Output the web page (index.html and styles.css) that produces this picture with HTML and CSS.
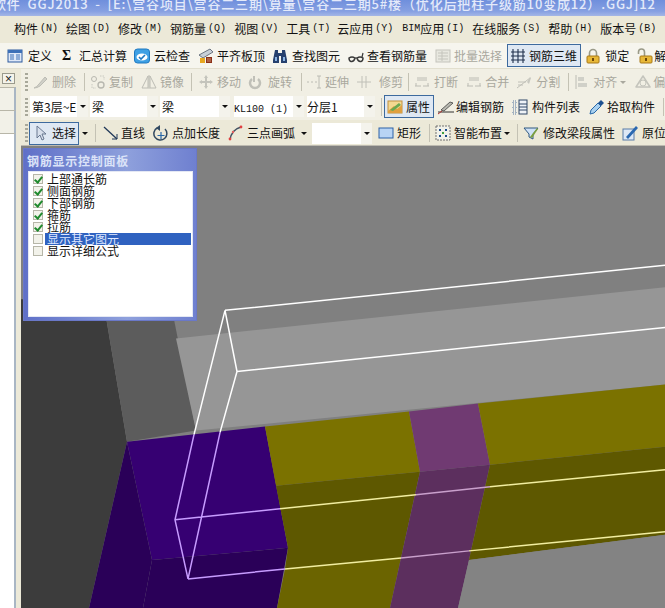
FILE: index.html
```html
<!DOCTYPE html>
<html lang="zh-CN">
<head>
<meta charset="utf-8">
<title>钢筋三维</title>
<link rel="stylesheet" href="styles.css">
</head>
<body>
<svg class="defs" width="0" height="0" aria-hidden="true">
  <symbol id="i-def" viewBox="0 0 16 16"><rect x="1" y="2" width="14" height="12" fill="#dfe8f8" stroke="#2c5a9e"/><rect x="1" y="2" width="14" height="3" fill="#3d70b8"/><path d="M3 7h4M3 9h4M3 11h4M9 7h4M9 9h4M9 11h4" stroke="#3d70b8"/></symbol>
  <symbol id="i-cloud" viewBox="0 0 16 16"><rect x="0.5" y="1" width="15" height="14" rx="3" fill="#3ea0e4" stroke="#1e78c0"/><ellipse cx="8" cy="9" rx="5.5" ry="3.6" fill="#fff"/><path d="M5 9l2 2 4-4" stroke="#1e78c0" stroke-width="1.6" fill="none"/></symbol>
  <symbol id="i-level" viewBox="0 0 16 16"><path d="M1 7L12 1l3 3L5 10z" fill="#c8d0d8" stroke="#6a7480"/><rect x="2" y="10" width="5" height="5" fill="#e8a820"/><rect x="8" y="9" width="6" height="6" fill="#8a3018"/><path d="M9 11h4M9 13h4" stroke="#d09070"/></symbol>
  <symbol id="i-bino" viewBox="0 0 16 16"><path d="M3 2h3v3h4V2h3l2 10v3H9V8H7v7H1v-3z" fill="#26406e"/><path d="M3 9h2v4H3zM11 9h2v4h-2z" fill="#8ab4e4"/></symbol>
  <symbol id="i-glass" viewBox="0 0 16 16"><path d="M1 10q3-2 6 0q-1 4-4 3.500Q1 13 1 10zM9 10q3-2 6 0q0 3-2 3.500Q10 14 9 10z" fill="none" stroke="#3a3a3a" stroke-width="1.500"/><path d="M7 10h2M14 9l1-4" stroke="#3a3a3a" stroke-width="1.200" fill="none"/></symbol>
  <symbol id="i-batch" viewBox="0 0 16 16"><rect x="1" y="2" width="14" height="12" fill="#e8e8e0" stroke="#c4c4bc"/><path d="M3 5h10M3 8h10M3 11h10M7 3v10" stroke="#c4c4bc"/></symbol>
  <symbol id="i-grid" viewBox="0 0 16 16"><path d="M1 4h14M1 8h14M1 12h14M3 1v14M8 1v14M13 1v14" stroke="#20304c" stroke-width="1.100"/></symbol>
  <symbol id="i-lock" viewBox="0 0 16 16"><path d="M4.500 8V5a3.500 3.500 0 017 0v3" fill="none" stroke="#9a9a88" stroke-width="1.600"/><rect x="2" y="8" width="12" height="7" rx="1" fill="#e8b838" stroke="#a87818"/><rect x="7" y="10" width="2" height="3" fill="#704808"/></symbol>
  <symbol id="i-unlock" viewBox="0 0 16 16"><path d="M1.500 6V4a3 3 0 016 0v4" fill="none" stroke="#9a9a88" stroke-width="1.600"/><rect x="3" y="8" width="12" height="7" rx="1" fill="#e8b838" stroke="#a87818"/><rect x="8" y="10" width="2" height="3" fill="#704808"/></symbol>
  <symbol id="i-erase" viewBox="0 0 16 16"><path d="M2 14q3-1 5-4l6-7 2 2-7 7q-3 2-6 2z" fill="#d0d0c8" stroke="#bcbcb4"/></symbol>
  <symbol id="i-copy" viewBox="0 0 16 16"><circle cx="4" cy="5" r="2.500" fill="none" stroke="#b8b8b0"/><circle cx="11" cy="11" r="3" fill="none" stroke="#b8b8b0" stroke-width="1.400"/><path d="M10 2h4v4M2 10v4h4" stroke="#c8c8c0" stroke-dasharray="1.500 1" fill="none"/></symbol>
  <symbol id="i-mirror" viewBox="0 0 16 16"><path d="M7 2L1 14h6zM9 2l6 12H9z" fill="none" stroke="#bcbcb4"/><path d="M8 1v14" stroke="#bcbcb4"/></symbol>
  <symbol id="i-move" viewBox="0 0 16 16"><path d="M8 1l2 3H9v3h3V6l3 2-3 2V9H9v3h1l-2 3-2-3h1V9H4v1L1 8l3-2v1h3V4H6z" fill="#c4c4bc"/></symbol>
  <symbol id="i-rotate" viewBox="0 0 16 16"><path d="M5 5a5 5 0 106 0" fill="none" stroke="#c0c0b8" stroke-width="2.500"/><path d="M7 2v6" stroke="#c0c0b8" stroke-width="2"/></symbol>
  <symbol id="i-extend" viewBox="0 0 16 16"><path d="M1 8h2M5 8h2M9 8h2" stroke="#bcbcb4"/><path d="M13 2v12M11 2h4M11 14h4" stroke="#bcbcb4"/></symbol>
  <symbol id="i-trim" viewBox="0 0 16 16"><path d="M1 8h14M6 2v12M10 2v12" stroke="#c0c0b8"/></symbol>
  <symbol id="i-break" viewBox="0 0 16 16"><path d="M1 12h6M9 12h6M2 12V9M14 12V9M3 6h10M3 4h10" stroke="#bcbcb4"/></symbol>
  <symbol id="i-split" viewBox="0 0 16 16"><path d="M1 14L14 4M2 8h8M2 11h5" stroke="#c0c0b8"/><path d="M11 8l3-5 1 1-2 6z" fill="#c8c8c0"/></symbol>
  <symbol id="i-align" viewBox="0 0 16 16"><path d="M2 1v14" stroke="#bcbcb4"/><rect x="4" y="3" width="6" height="4" fill="#d0d0c8"/><rect x="4" y="9" width="9" height="4" fill="#d0d0c8"/></symbol>
  <symbol id="i-offset" viewBox="0 0 16 16"><path d="M1 13L8 2l7 11z" fill="none" stroke="#c4c4bc" stroke-width="1.500" stroke-linejoin="round"/><circle cx="8" cy="9" r="3" fill="none" stroke="#c4c4bc"/></symbol>
  <symbol id="i-prop" viewBox="0 0 16 16"><rect x="1" y="2" width="14" height="12" fill="#f4d890" stroke="#c09040"/><path d="M1 12l6-5 3 3 5-4v8H1z" fill="#e0a040"/><path d="M3 11l9-7 2 2-8 6z" fill="#6aa850"/></symbol>
  <symbol id="i-edit" viewBox="0 0 16 16"><path d="M0 13h16" stroke="#303030"/><path d="M3 11l9-8 3 1-9 8z" fill="#b8b8b0" stroke="#404040" stroke-width=".8"/><path d="M0 15l4-3" stroke="#b03030"/></symbol>
  <symbol id="i-list" viewBox="0 0 16 16"><path d="M1 2h3v3H1zM1 7h3v3H1zM1 12h3v3H1z" fill="none" stroke="#5878a0" stroke-dasharray="1 1"/><rect x="7" y="1" width="8" height="14" fill="#eef2f8" stroke="#304868"/><path d="M7 5h8M7 8h8M7 11h8" stroke="#304868"/></symbol>
  <symbol id="i-pick" viewBox="0 0 16 16"><path d="M1 15l1-4 7-7 3 3-7 7z" fill="#a8d0f0" stroke="#2868a8"/><path d="M9 4l3-3 3 3-3 3z" fill="#1c5090"/></symbol>
  <symbol id="i-cursor" viewBox="0 0 10 16"><path d="M1 1v12l3-3 2 5 2-1-2-5h4z" fill="#d8e0ec" stroke="#687890"/></symbol>
  <symbol id="i-line" viewBox="0 0 16 16"><path d="M1 2l13 12" stroke="#203858" stroke-width="1.300"/><path d="M9 14h5V9" stroke="#203858" fill="none"/></symbol>
  <symbol id="i-addlen" viewBox="0 0 16 16"><path d="M5 3a6.500 6.500 0 108 1" fill="none" stroke="#304860" stroke-width="1.500"/><path d="M8 0v6L4 3z" fill="#304860"/><path d="M9 7v7M5.500 10.500h7" stroke="#2868a8" stroke-width="1.200"/></symbol>
  <symbol id="i-arc" viewBox="0 0 16 16"><path d="M2 15Q3 5 13 2" fill="none" stroke="#405060" stroke-width="1.400"/><circle cx="2" cy="14" r="1.400" fill="#e04040"/><circle cx="13" cy="2" r="1.400" fill="#e04040"/><circle cx="5" cy="7" r="1.200" fill="#e06060"/></symbol>
  <symbol id="i-rect" viewBox="0 0 16 16"><rect x="1" y="3" width="14" height="10" fill="#b8d4f4" stroke="#2c62a8"/></symbol>
  <symbol id="i-smart" viewBox="0 0 16 16"><rect x="1" y="1" width="14" height="14" fill="#f2f2ea" stroke="#707070" stroke-dasharray="2 1"/><path d="M4 4h2v2H4zM10 4h2v2h-2zM4 10h2v2H4zM10 10h2v2h-2z" fill="#1c4c8c"/><path d="M7 7h2v2H7z" fill="#40a040"/></symbol>
  <symbol id="i-filter" viewBox="0 0 16 16"><path d="M1 3h14l-5 6v5l-4-2V9z" fill="#cfe2f6" stroke="#305880"/><path d="M7 12l7-9 1 1-6 9z" fill="#7ca040"/></symbol>
  <symbol id="i-inplace" viewBox="0 0 16 16"><rect x="1" y="4" width="11" height="11" fill="#dde8f6" stroke="#587ca8"/><path d="M4 12L14 1l2 2L6 14z" fill="#2a68b0"/></symbol>
</svg>

<header class="titlebar"><span class="titletext">软件 GGJ2013 - [E:\宫谷项目\宫谷二三期\算量\宫谷二三期5#楼（优化后把柱子级筋10变成12）.GGJ]12</span></header>

<nav class="menubar">
  <span class="mi">构件<span class="lat">(N)</span></span>
  <span class="mi">绘图<span class="lat">(D)</span></span>
  <span class="mi">修改<span class="lat">(M)</span></span>
  <span class="mi">钢筋量<span class="lat">(Q)</span></span>
  <span class="mi">视图<span class="lat">(V)</span></span>
  <span class="mi">工具<span class="lat">(T)</span></span>
  <span class="mi m7">云应用<span class="lat">(Y)</span></span>
  <span class="mi m9"><span class="latn">BIM</span>应用<span class="lat">(I)</span></span>
  <span class="mi">在线服务<span class="lat">(S)</span></span>
  <span class="mi">帮助<span class="lat">(H)</span></span>
  <span class="mi">版本号<span class="lat">(B)</span></span>
  <span class="menubox m7"></span>
</nav>

<div class="toolbar tb1">
  <span class="tool g5"><svg class="ic"><use href="#i-def"/></svg>定义</span>
  <span class="tool m10 g9"><span class="sigma">Σ</span>汇总计算</span>
  <span class="tool m7 g4"><svg class="ic"><use href="#i-cloud"/></svg>云检查</span>
  <span class="tool m8 g3"><svg class="ic"><use href="#i-level"/></svg>平齐板顶</span>
  <span class="tool m7 g4"><svg class="ic"><use href="#i-bino"/></svg>查找图元</span>
  <span class="tool m8 g3"><svg class="ic"><use href="#i-glass"/></svg>查看钢筋量</span>
  <span class="tool m8 g3 off"><svg class="ic"><use href="#i-batch"/></svg>批量选择</span>
  <span class="tool m5 g3 on pad23"><svg class="ic"><use href="#i-grid"/></svg>钢筋三维</span>
  <span class="tool m4 g4"><svg class="ic"><use href="#i-lock"/></svg>锁定</span>
  <span class="tool m8 g1"><svg class="ic"><use href="#i-unlock"/></svg>解锁</span>
</div>

<div class="body">
  <aside class="sidepane">
    <div class="sidehead"><button class="closebtn" type="button">×</button></div>
    <div class="siderow"></div>
    <div class="siderow"></div>
    <div class="sidefill"></div>
  </aside>

  <main class="workarea">
    <div class="toolbar tb2">
      <span class="grip"></span>
      <span class="tool m4 g4 off"><svg class="ic"><use href="#i-erase"/></svg>删除</span>
      <span class="sep m8"></span>
      <span class="tool m5 g3 off"><svg class="ic"><use href="#i-copy"/></svg>复制</span>
      <span class="tool m8 g3 off"><svg class="ic"><use href="#i-mirror"/></svg>镜像</span>
      <span class="sep m7"></span>
      <span class="tool m6 g3 off"><svg class="ic"><use href="#i-move"/></svg>移动</span>
      <span class="tool m6 g5 off"><svg class="ic"><use href="#i-rotate"/></svg>旋转</span>
      <span class="sep m9"></span>
      <span class="tool m4 g3 off"><svg class="ic"><use href="#i-extend"/></svg>延伸</span>
      <span class="tool m7 g7 off"><svg class="ic"><use href="#i-trim"/></svg>修剪</span>
      <span class="sep m5"></span>
      <span class="tool m5 g4 off"><svg class="ic"><use href="#i-break"/></svg>打断</span>
      <span class="tool m8 g3 off"><svg class="ic"><use href="#i-break"/></svg>合并</span>
      <span class="tool m7 g4 off"><svg class="ic"><use href="#i-split"/></svg>分割</span>
      <span class="sep m8"></span>
      <span class="tool m5 g3 off"><svg class="ic"><use href="#i-align"/></svg>对齐<span class="arr off-arr"></span></span>
      <span class="tool m9 g2 off"><svg class="ic"><use href="#i-offset"/></svg>偏移</span>
    </div>

    <div class="toolbar tb3">
      <span class="grip"></span>
      <span class="sel s47 m2"><span class="seltext">第3层~E</span></span><span class="selarrow"><span class="arr"></span></span>
      <span class="sel s57 m2"><span class="seltext">梁</span></span><span class="selarrow"><span class="arr"></span></span>
      <span class="sel s59 m2"><span class="seltext">梁</span></span><span class="selarrow"><span class="arr"></span></span>
      <span class="sel s59 m4 flush"><span class="seltext"><span class="latn">KL100 (1)</span></span></span><span class="selarrow"><span class="arr"></span></span>
      <span class="sel s57 m3 flush"><span class="seltext">分层1</span></span><span class="selarrow"><span class="arr"></span></span>
      <span class="sep m6"></span>
      <span class="tool m2 g3 on pad23"><svg class="ic"><use href="#i-prop"/></svg>属性</span>
      <span class="tool m4 g2"><svg class="ic"><use href="#i-edit"/></svg>编辑钢筋</span>
      <span class="tool m8 g4"><svg class="ic"><use href="#i-list"/></svg>构件列表</span>
      <span class="tool m9 g2"><svg class="ic"><use href="#i-pick"/></svg>拾取构件</span>
      <span class="sep m8"></span>
    </div>

    <div class="toolbar tb4">
      <span class="grip"></span>
      <span class="tool m1 g6 on pad62"><svg class="ic10"><use href="#i-cursor"/></svg>选择</span>
      <span class="arrbox m2"><span class="arr"></span></span>
      <span class="sep m6"></span>
      <span class="tool m7 g2"><svg class="ic"><use href="#i-line"/></svg>直线</span>
      <span class="tool m7 g4"><svg class="ic"><use href="#i-addlen"/></svg>点加长度</span>
      <span class="tool m8 g3"><svg class="ic"><use href="#i-arc"/></svg>三点画弧</span>
      <span class="arrbox m5"><span class="arr"></span></span>
      <span class="sel s44 m4"></span><span class="selarrow"><span class="arr"></span></span>
      <span class="tool m6 g3"><svg class="ic"><use href="#i-rect"/></svg>矩形</span>
      <span class="sep m8"></span>
      <span class="tool m5 g3"><svg class="ic"><use href="#i-smart"/></svg>智能布置</span>
      <span class="arrbox m1"><span class="arr"></span></span>
      <span class="sep m6"></span>
      <span class="tool m5 g4"><svg class="ic"><use href="#i-filter"/></svg>修改梁段属性</span>
      <span class="tool m7 g4"><svg class="ic"><use href="#i-inplace"/></svg>原位标注</span>
    </div>

    <section class="viewport">
      <svg class="scene" viewBox="21 147 644 461" preserveAspectRatio="none">
        <rect x="21" y="147" width="644" height="461" fill="#808080"/>
        <polygon points="21,300 103,300 127,442 89,608 21,608" fill="#3c3c3c"/>
        <polygon points="103,300 170,300 196,431 127,442" fill="#5c5c5c"/>
        <polygon points="176,339 665,288 665,385 196,431" fill="#969696"/>
        <polygon points="127,442 265,427 288,548 152,560" fill="#360072"/>
        <polygon points="127,442 152,560 143,608 89,608" fill="#2a0058"/>
        <polygon points="152,560 288,548 277,608 143,608" fill="#2a0058"/>
        <polygon points="265,427 409,412 420,472 276,486" fill="#7b7200"/>
        <polygon points="276,486 420,472 401,558 285,569 288,548" fill="#5e5800"/>
        <polygon points="285,569 401,558 390,608 277,608" fill="#6b6400"/>
        <polygon points="409,412 478,404 490,465 420,472" fill="#703a72"/>
        <polygon points="420,472 490,465 469,560 458,608 390,608" fill="#5c2f5e"/>
        <polygon points="478,404 665,385 665,447 490,465" fill="#7b7200"/>
        <polygon points="490,465 665,447 665,535 469,560" fill="#5e5800"/>
        <polygon points="469,560 665,535 665,608 458,608" fill="#838383"/>
        <g class="wire">
          <path d="M225 311L665 266M237 372L665 328M225 311L237 372M225 311L194 435M237 372L220 433"/>
          <path class="wire-purple" d="M194 435L175 520L188 579L220 433M175 520L280 509M188 579L285 569"/>
          <path class="wire-yellow" d="M280 509L416 495M490 487L665 470M285 569L401 558M469 551L665 532"/>
          <path class="wire-pink" d="M416 495L490 487M401 558L469 551"/>
        </g>
      </svg>

      <div class="panel">
        <div class="panelhead">钢筋显示控制面板</div>
        <ul class="panellist">
          <li class="opt"><span class="cb checked"></span><span class="optlabel">上部通长筋</span></li>
          <li class="opt"><span class="cb checked"></span><span class="optlabel">侧面钢筋</span></li>
          <li class="opt"><span class="cb checked"></span><span class="optlabel">下部钢筋</span></li>
          <li class="opt"><span class="cb checked"></span><span class="optlabel">箍筋</span></li>
          <li class="opt"><span class="cb checked"></span><span class="optlabel">拉筋</span></li>
          <li class="opt selected"><span class="cb"></span><span class="optlabel">显示其它图元</span></li>
          <li class="opt"><span class="cb"></span><span class="optlabel">显示详细公式</span></li>
        </ul>
      </div>
    </section>
  </main>
</div>
</body>
</html>
```
FILE: styles.css
```css
* { box-sizing: border-box; }
html, body { margin: 0; height: 100%; }
body {
  width: 665px;
  height: 608px;
  overflow: hidden;
  display: flex;
  flex-direction: column;
  background: #ece9d8;
  color: #111;
  font: 12px/14px "Noto Sans CJK SC", "Liberation Sans", sans-serif;
  white-space: nowrap;
}
.defs { position: absolute; }

.titlebar {
  height: 16px;
  flex: none;
  overflow: hidden;
  background: linear-gradient(#6f8fdc, #86a0e2 70%, #a4b6e6);
}
.titletext {
  display: block;
  margin: -4px 0 0 -7px;
  color: #e4eafa;
  font-weight: 500;
  font-size: 13px;
  line-height: 16px;
  letter-spacing: .85px;
  word-spacing: 3px;
}

.menubar {
  height: 27px;
  flex: none;
  display: flex;
  align-items: center;
  gap: 8px;
  padding: 0 0 2px 14px;
  background: #ece9d8;
  overflow: hidden;
}
.mi { display: inline-flex; align-items: center; font-size: 12px; }
.mi.m7 { margin-left: -1px; }
.mi.m9 { margin-left: 1px; }
.lat { font: 10px/12px "Liberation Mono", monospace; padding-left: 2px; }
.latn { font: 10px/12px "Liberation Mono", monospace; }
.menubox { flex: none; width: 8px; height: 18px; border: 1px solid #98a4b8; background: #fff; margin-left: -1px; }

.toolbar { flex: none; display: flex; align-items: center; overflow: hidden; }
.tb1 { height: 26px; padding-left: 7px; background: #f6f5ee; border-bottom: 1px solid #e2dfcf; }
.tb2 { height: 26px; padding-left: 4px; background: #f1efe4; }
.tb3 { height: 25px; padding: 0 0 2px 4px; background: #f1efe4; }
.tb4 { height: 26px; padding: 1px 0 0 4px; background: #ece9d8; border-bottom: 1px solid #bdbab0; }

.tool { flex: none; display: inline-flex; align-items: center; height: 22px; }
.tool.off { color: #a9a89e; }
.tool.on { height: 23px; border: 1px solid #3d6a9e; background: #dfe8f3; }
.pad23 { padding: 0 3px 0 2px; }
.pad62 { padding: 0 2px 0 6px; }
.ic { flex: none; width: 16px; height: 16px; }
.ic10 { flex: none; width: 10px; height: 16px; }
.sigma { width: 8px; font: 700 14px/14px "Liberation Serif", serif; color: #111; }

.g1 { gap: 1px; } .g2 { gap: 2px; } .g3 { gap: 3px; } .g4 { gap: 4px; }
.g5 { gap: 5px; } .g6 { gap: 6px; } .g7 { gap: 7px; } .g9 { gap: 9px; }
.m1 { margin-left: 1px; } .m2 { margin-left: 2px; } .m3 { margin-left: 3px; }
.m4 { margin-left: 4px; } .m5 { margin-left: 5px; } .m6 { margin-left: 6px; }
.m7 { margin-left: 7px; } .m8 { margin-left: 8px; } .m9 { margin-left: 9px; }
.m10 { margin-left: 10px; }

.grip {
  flex: none;
  width: 3px;
  height: 18px;
  background: repeating-linear-gradient(#a8a89a 0 2px, transparent 2px 4px);
}
.sep { flex: none; width: 1px; height: 18px; background: #c4c2b4; }

.sel { flex: none; display: block; height: 21px; background: #fff; line-height: 21px; padding-left: 2px; overflow: hidden; }
.sel.flush { padding-left: 0; }
.s44 { width: 49px; }
.s47 { width: 47px; }
.s57 { width: 57px; }
.s59 { width: 59px; }
.selarrow { flex: none; width: 11px; height: 21px; display: flex; align-items: center; justify-content: center; background: #f4f3ec; }
.arrbox { flex: none; width: 8px; display: flex; justify-content: center; }
.arr { display: block; width: 0; height: 0; border: 3px solid transparent; border-top: 3px solid #111; border-bottom: 0; }
.off-arr { border-top-color: #a9a89e; }

.body { flex: 1; min-height: 0; display: flex; }
.sidepane {
  flex: none;
  width: 21px;
  display: flex;
  flex-direction: column;
  padding-right: 5px;
  background: #ece9d8;
}
.sidehead { height: 18px; padding: 4px 0 0 2px; }
.closebtn {
  display: block;
  width: 13px;
  height: 11px;
  padding: 0;
  border: 1px solid #9a9a8c;
  background: #f4f3ea;
  color: #222;
  font: 12px/8px "Liberation Sans", sans-serif;
}
.siderow { height: 23px; background: #f2f1e8; border-top: 1px solid #b8b6a8; border-right: 2px solid #a9b6c4; }
.sidefill { flex: 1; background: #fff; border-top: 1px solid #b8b6a8; border-right: 2px solid #a9b6c4; }

.workarea { flex: 1; min-width: 0; display: flex; flex-direction: column; }
.viewport { position: relative; flex: 1; min-height: 0; }
.scene { display: block; width: 100%; height: 100%; }
.wire path { fill: none; stroke: #fff; stroke-width: 1.500; }
.wire .wire-purple { stroke: #c79cff; }
.wire .wire-yellow { stroke: #f2eea0; }
.wire .wire-pink { stroke: #c9a0cc; }

.panel {
  position: absolute;
  left: 2px;
  top: 2px;
  width: 174px;
  height: 173px;
  padding: 0 3px 3px 4px;
  display: flex;
  flex-direction: column;
  background: linear-gradient(90deg, #5f70c8, #8ea0dc 60%, #6f80d0);
  border: 1px solid #6a78c8;
}
.panelhead {
  flex: none;
  height: 22px;
  color: #dbe3f8;
  font-weight: 700;
  font-size: 12px;
  line-height: 23px;
  letter-spacing: .75px;
  margin-left: -1px;
}
.panellist {
  flex: 1;
  margin: 0;
  padding: 1px 0 0 3px;
  list-style: none;
  background: #fff;
  border: 1px solid #e4e8f4;
}
.opt { display: flex; align-items: center; height: 12px; gap: 3px; }
.cb {
  flex: none;
  width: 10px;
  height: 10px;
  margin-left: 1px;
  border: 1px solid #b6b6a8;
  background: #f2f2ea;
  position: relative;
}
.cb.checked::after {
  content: "";
  position: absolute;
  left: 2px;
  top: 0;
  width: 3px;
  height: 6px;
  border: solid #1f8a2e;
  border-width: 0 2px 2px 0;
  transform: rotate(40deg);
}
.optlabel { flex: 1; margin-right: 1px; padding-left: 2px; height: 12px; line-height: 12px; font-size: 12px; }
.opt .optlabel { margin-left: -1px; }
.selected .optlabel { background: #2f62c0; color: #dfe8ff; }
```
